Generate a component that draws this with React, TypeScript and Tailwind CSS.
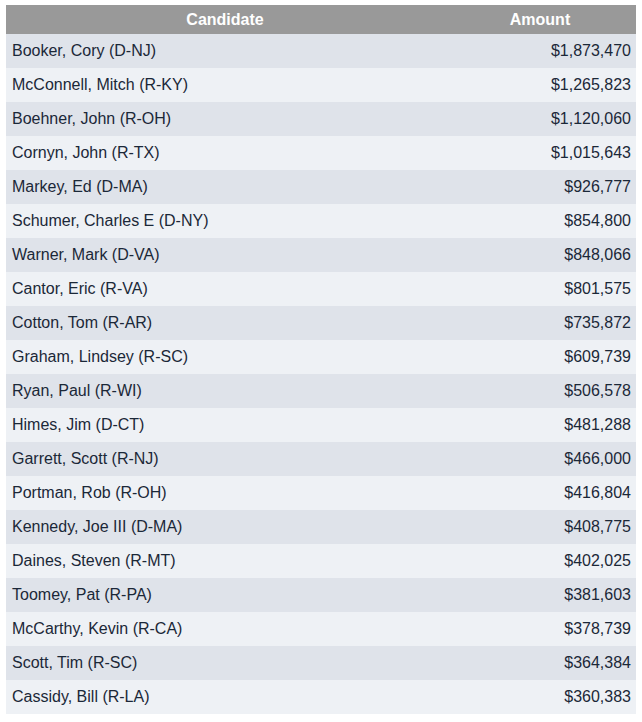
import React from "react";

const rows: [string, string][] = [
  ["Booker, Cory (D-NJ)", "$1,873,470"],
  ["McConnell, Mitch (R-KY)", "$1,265,823"],
  ["Boehner, John (R-OH)", "$1,120,060"],
  ["Cornyn, John (R-TX)", "$1,015,643"],
  ["Markey, Ed (D-MA)", "$926,777"],
  ["Schumer, Charles E (D-NY)", "$854,800"],
  ["Warner, Mark (D-VA)", "$848,066"],
  ["Cantor, Eric (R-VA)", "$801,575"],
  ["Cotton, Tom (R-AR)", "$735,872"],
  ["Graham, Lindsey (R-SC)", "$609,739"],
  ["Ryan, Paul (R-WI)", "$506,578"],
  ["Himes, Jim (D-CT)", "$481,288"],
  ["Garrett, Scott (R-NJ)", "$466,000"],
  ["Portman, Rob (R-OH)", "$416,804"],
  ["Kennedy, Joe III (D-MA)", "$408,775"],
  ["Daines, Steven (R-MT)", "$402,025"],
  ["Toomey, Pat (R-PA)", "$381,603"],
  ["McCarthy, Kevin (R-CA)", "$378,739"],
  ["Scott, Tim (R-SC)", "$364,384"],
  ["Cassidy, Bill (R-LA)", "$360,383"],
];

export default function App() {
  return (
    <div className="bg-white w-[642px] h-[722px] pt-[5px] pl-[6px]" style={{ fontFamily: '"Liberation Sans", Arial, sans-serif' }}>
      <div className="w-[630px] flex flex-col">
        <div className="flex h-[29px] bg-[#999999] text-white font-bold text-[16px] items-center">
          <div className="w-[438px] text-center">Candidate</div>
          <div className="flex-1 text-center">Amount</div>
        </div>
        {rows.map(([name, amt], i) => (
          <div
            key={name}
            className={
              "flex h-[34px] items-center text-[16px] text-[#1b2838] " +
              (i % 2 === 0 ? "bg-[#dfe3ea]" : "bg-[#eef1f5]")
            }
          >
            <div className="w-[438px] pl-[6px]">{name}</div>
            <div className="flex-1 text-right pr-[5px]">{amt}</div>
          </div>
        ))}
      </div>
    </div>
  );
}
